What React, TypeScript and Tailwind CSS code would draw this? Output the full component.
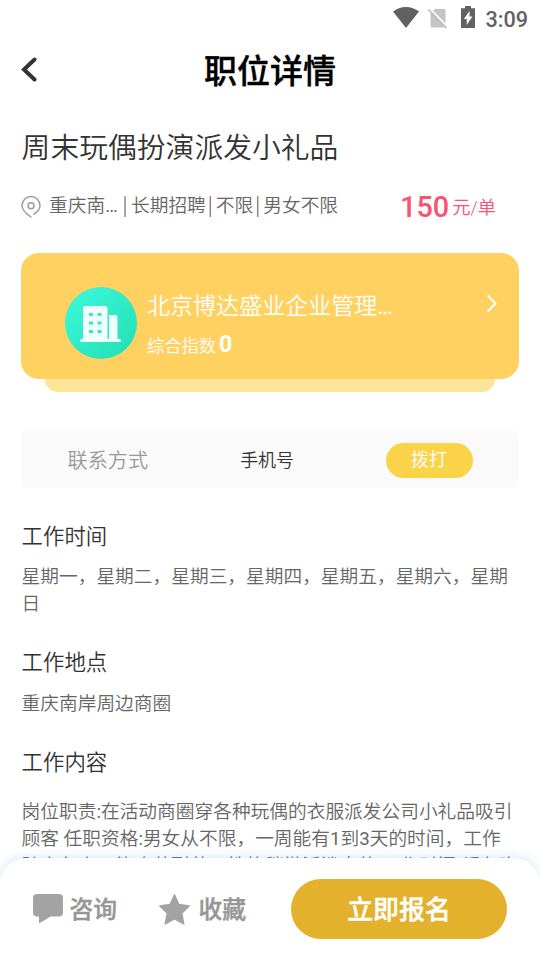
import React from 'react';

const sections = [
  {
    title: '工作时间',
    text: '星期一，星期二，星期三，星期四，星期五，星期六，星期日',
    className: 'mt-[33px]',
    textClass: 'mt-[11px]',
  },
  {
    title: '工作地点',
    text: '重庆南岸周边商圈',
    className: 'mt-[29px]',
    textClass: 'mt-[12px]',
  },
  {
    title: '工作内容',
    text: '岗位职责:在活动商圈穿各种玩偶的衣服派发公司小礼品吸引顾客 任职资格:男女从不限，一周能有1到3天的时间，工作\n踏实负责，能吃苦耐劳，性格稍微活泼点的 工作时间:都在晚',
    className: 'mt-[29px]',
    textClass: 'mt-[20px]',
  },
];

const Divider = ({ className }: { className: string }) => (
  <span className={`-mt-[3px] font-['Noto_Sans_CJK_SC',sans-serif] ${className}`}>|</span>
);

// latin characters sit next to the lighter chinese ones at regular weight
const MixedText = ({ text }: { text: string }) => (
  <>
    {text.split(/([0-9:…]+)/).map((part, i) =>
      i % 2 ? <span key={i} className="font-normal">{part}</span> : part
    )}
  </>
);

const StatusBar = () => (
  <div className="flex h-[37px] shrink-0 items-center justify-end pr-3 text-[#616161]">
    <svg className="mb-[2px] h-[21px] w-[26px]" viewBox="0 0 26 21" fill="currentColor">
      <path d="M0 4.600C3.600 1.700 8 0 13 0s9.400 1.700 13 4.600L13 21z" />
    </svg>
    <svg className="mb-[1px] ml-[9px] h-[21px] w-[20px]" viewBox="0 0 20 21">
      <path d="M7 1h9a1.500 1.500 0 0 1 1.500 1.500V18a1.500 1.500 0 0 1-1.500 1.500H4A1.500 1.500 0 0 1 2.500 18V5.500z" fill="#c4c4c4" />
      <path d="M1.500 .5l18 18.500" stroke="#fff" strokeWidth="2" />
      <path d="M.5 1.500l18 18.500" stroke="#bdbdbd" strokeWidth="1.700" />
    </svg>
    <svg className="mb-[3px] ml-[13px] h-[22px] w-[14px]" viewBox="0 0 14 22">
      <path d="M4 0h6v2.200h4V22H0V2.200h4z" fill="currentColor" />
      <path d="M8.600 5v5.600h2.900L5.700 19v-5.900H2.800z" fill="#fff" />
    </svg>
    <span className="ml-[10px] mt-[2px] text-[21.600px] font-medium leading-none">3:09</span>
  </div>
);

const CompanyCard = () => (
  <div className="mt-[29px]">
    <div className="flex h-[126px] rounded-[18px] bg-[#ffd161] pl-[43.500px] pr-[22px] text-white">
      <div className="mt-[34px] flex h-[72px] w-[72px] shrink-0 items-center justify-center rounded-full bg-linear-to-br from-[#3cfade] to-[#22ddb2]">
        <svg className="mt-[2px] h-[36px] w-[41px]" viewBox="0 0 41 36" fill="#f0fffa">
          <path fillRule="evenodd" d="M5 0h20a2.500 2.500 0 0 1 2.500 2.500V33H3V2A2 2 0 0 1 5 0zM9 7v3h4V7zm8.500 0v3h4V7zM9 15.500v3h4v-3zm8.500 0v3h4v-3zM9 24v3h4v-3zm8.500 0v3h4v-3z" />
          <path d="M29 9h6a2.500 2.500 0 0 1 2.500 2.500V33H29z" />
          <rect x="0" y="33" width="41" height="3" rx="1.500" />
        </svg>
      </div>
      <div className="ml-[10.500px] mt-[37px] flex-1">
        <p className="text-[23.040px] font-[350] leading-[34px]">
          <MixedText text="北京博达盛业企业管理…" />
        </p>
        <p className="mt-[5px] flex items-center text-[17.280px] leading-[28px]">
          <span className="pt-[3px] font-[350]">综合指数</span>
          <span className="ml-[3px] text-[23.040px] font-bold">0</span>
        </p>
      </div>
      <svg className="mt-[41px] h-[19px] w-[11px]" viewBox="0 0 11 19" fill="none" stroke="currentColor" strokeWidth="2.200">
        <path d="M1.500 1.200l8 8.300-8 8.300" />
      </svg>
    </div>
    <div className="mx-[24px] h-[13px] rounded-b-[13px] bg-[#fde597]" />
  </div>
);

const BottomBar = () => (
  <footer className="relative flex h-[102px] shrink-0 items-start rounded-t-[26px] bg-white pl-[33px] pr-[33px] pt-[21px] text-[23.760px] font-medium text-[#969696] shadow-[0_-2px_8px_1px_rgba(100,180,245,0.22)] [-webkit-text-stroke:0.4px]">
    <div className="flex h-[60px] items-center">
      <svg className="h-[30px] w-[30px]" viewBox="0 0 30 30" fill="#a3a3a3">
        <path d="M4 0h22a4 4 0 0 1 4 4v14.500a4 4 0 0 1-4 4h-8.500L6 29.500v-7H4a4 4 0 0 1-4-4V4a4 4 0 0 1 4-4z" />
      </svg>
      <span className="ml-[6.500px] mt-[3px] leading-none">咨询</span>
    </div>
    <div className="ml-[41.500px] flex h-[60px] items-center">
      <svg className="h-[31px] w-[31px]" viewBox="0 0 31 31" fill="#a3a3a3" stroke="#a3a3a3" strokeWidth="1.500" strokeLinejoin="round">
        <path d="M15.500 1l4.400 9.600 10.200 1.300-7.400 7.300 2 10.600-9.200-5-9.200 5 2-10.600L.9 11.900l10.200-1.300z" />
      </svg>
      <span className="ml-[9px] mt-[3px] leading-none">收藏</span>
    </div>
    <button className="ml-auto h-[60px] w-[216px] rounded-full bg-[#e3b12b] pt-[3px] text-[25.920px] font-medium leading-none text-white">
      立即报名
    </button>
  </footer>
);

export default function App() {
  return (
    <div className="flex h-[960px] w-[540px] flex-col overflow-hidden bg-white font-['Roboto','Noto_Sans_CJK_SC',sans-serif] text-[#333]">
      <StatusBar />

      {/* nav */}
      <header className="grid h-[67px] shrink-0 grid-cols-[100px_1fr_100px] items-center">
        <svg className="mb-[2px] ml-[21px] h-[25px] w-[16px]" viewBox="0 0 16 25" fill="none" stroke="#333" strokeWidth="4" strokeLinecap="round">
          <path d="M13.500 2.500l-10.500 10 10.500 10" />
        </svg>
        <h1 className="mt-[2px] text-center text-[33px] font-medium leading-none text-black [-webkit-text-stroke:0.4px]">职位详情</h1>
      </header>

      <main className="min-h-0 flex-1 overflow-hidden px-[21px]">
        <h2 className="ml-[.6px] mt-[23px] text-[28.800px] font-[350] leading-[42px]">周末玩偶扮演派发小礼品</h2>

        <div className="mt-[20px] flex h-[34px] items-center text-[18.720px] font-[350] text-[#666]">
          <svg className="mt-[2px] h-[22px] w-[20px]" viewBox="0 0 20 22" fill="none" stroke="#999" strokeWidth="1.400" strokeLinecap="round">
            <path d="M12.800 18.200C16.500 16 19 13 19 9.500a9 9 0 0 0-18 0c0 4.500 4 8.200 9 11.500" />
            <circle cx="10" cy="9.800" r="3" />
          </svg>
          <span className="ml-[8px] w-[73.500px] whitespace-nowrap">
            <MixedText text="重庆南…" />
          </span>
          <Divider className="w-[8.500px]" />
          <span>长期招聘</span>
          <Divider className="ml-[2px] w-[8px]" />
          <span>不限</span>
          <Divider className="ml-[2px] w-[8px]" />
          <span>男女不限</span>
          <span className="ml-auto mr-[23px] flex items-center text-[#fb5274]">
            <b className="pt-[4px] text-[28.800px] font-medium">150</b>
            <span className="ml-[3px] pt-[4px] text-[18.300px]">元/单</span>
          </span>
        </div>

        <div className="pt-px">
          <CompanyCard />
        </div>

        {/* contact */}
        <div className="mt-[39px] flex h-[57px] items-center rounded-[6px] bg-[#fafafa] pl-[46.500px] pr-[46.500px] font-[350]">
          <span className="mt-[3px] text-[20.160px] text-[#999]">联系方式</span>
          <span className="ml-[92px] mt-[2px] text-[18px]">手机号</span>
          <button className="ml-auto mt-[1px] h-[35px] w-[87px] rounded-full bg-[#fbd349] text-[18px] leading-none text-white">
            拨打
          </button>
        </div>

        {sections.map((s) => (
          <section key={s.title} className={`ml-[.6px] -mr-[3px] ${s.className}`}>
            <h3 className="text-[21.400px] font-[350] leading-[32px]">{s.title}</h3>
            <p className={`${s.textClass} whitespace-pre-line text-[18.720px] font-[350] leading-[27px] text-[#666]`}>
              <MixedText text={s.text} />
            </p>
          </section>
        ))}
      </main>

      <BottomBar />
    </div>
  );
}
